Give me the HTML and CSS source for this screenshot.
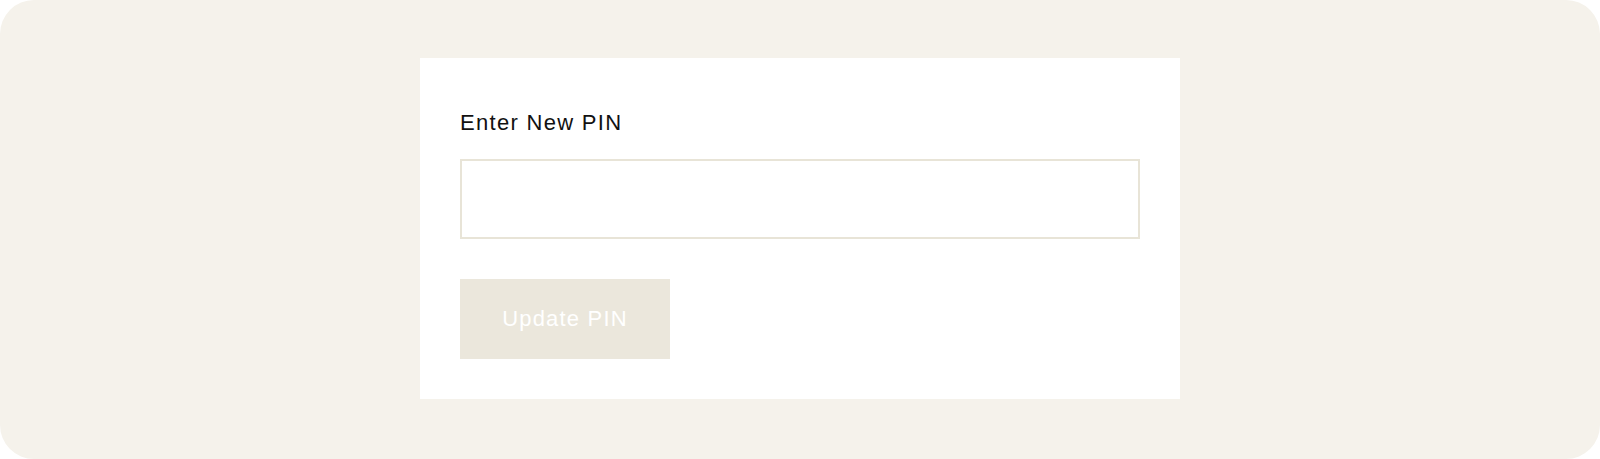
FILE: index.html
```html
<!DOCTYPE html>
<html lang="en">
<head>
<meta charset="utf-8">
<title>Update PIN</title>
<link rel="stylesheet" href="styles.css">
</head>
<body>
<div class="page">
  <form class="card">
    <label class="label" for="pin">Enter New PIN</label>
    <input class="input" id="pin" type="password">
    <button class="button" type="button">Update PIN</button>
  </form>
</div>
</body>
</html>
```
FILE: styles.css
```css
html, body {
  margin: 0;
  padding: 0;
  background: #ffffff;
}
.page {
  box-sizing: border-box;
  width: 1600px;
  height: 459px;
  background: #f5f2eb;
  border-radius: 34px;
  display: flex;
  justify-content: center;
  align-items: flex-start;
  padding-top: 58px;
  font-family: "Liberation Sans", Arial, sans-serif;
}
.card {
  box-sizing: border-box;
  width: 760px;
  height: 341px;
  background: #ffffff;
  padding: 53px 40px 40px;
  display: flex;
  flex-direction: column;
  align-items: flex-start;
}
.label {
  font-size: 22px;
  line-height: 24px;
  letter-spacing: 1.3px;
  color: #111111;
  margin-bottom: 24px;
}
.input {
  box-sizing: border-box;
  width: 680px;
  height: 80px;
  margin: 0;
  border: 2px solid #e8e4d7;
  background: #ffffff;
  outline: none;
  margin-bottom: 40px;
}
.button {
  box-sizing: border-box;
  width: 210px;
  height: 80px;
  margin: 0;
  border: none;
  background: #ebe7dc;
  color: #ffffff;
  font-family: "Liberation Sans", Arial, sans-serif;
  font-size: 22px;
  letter-spacing: 1.2px;
  padding: 0;
}
```
